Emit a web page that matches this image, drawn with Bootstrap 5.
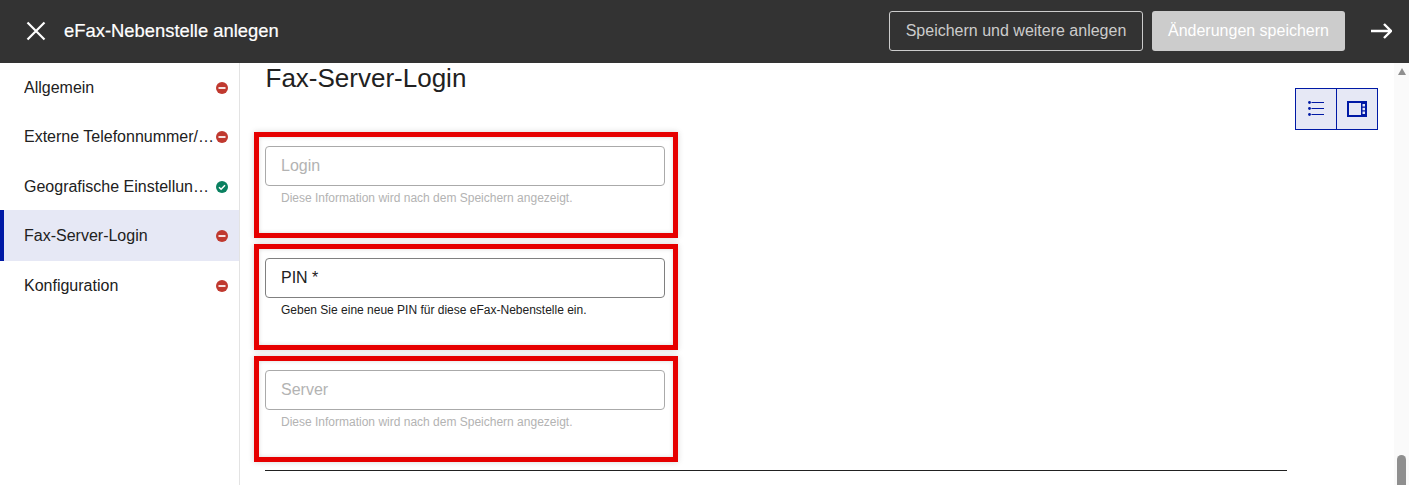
<!doctype html>
<html lang="de">
<head>
<meta charset="utf-8">
<title>eFax-Nebenstelle anlegen</title>
<link href="https://cdn.jsdelivr.net/npm/bootstrap@5.3.0/dist/css/bootstrap.min.css" rel="stylesheet">
<style>
html,body{height:485px;overflow:hidden}
body{font-family:"Liberation Sans",Arial,sans-serif;color:#212121;background:#fff;font-size:16px}
.topbar{height:63px;background:#333;color:#fff;padding:0 17px 1px 26px}
.topbar-title{font-size:18.4px;margin:0 0 0 18px;font-weight:400;-webkit-text-stroke:.2px #fff}
.btn-ghost,.btn-ghost:hover{height:40px;width:254px;border:1px solid #ccc;color:#ccc;background:transparent;border-radius:3px;font-size:16px;padding:0}
.btn-muted,.btn-muted:disabled{height:40px;width:193px;border:0;background:#ccc;color:#fff;opacity:1;border-radius:3px;font-size:16px;padding:0;margin:0 26px 0 9px}
.shell{height:422px}
.sidenav{width:240px;flex:none;border-right:1px solid #e3e3e3}
.sideitem{height:49.5px;padding:1.5px 11px 0 24px;color:#212121;text-decoration:none;font-size:16px}
.sideitem:first-child{height:48.75px}
.sideitem span{white-space:nowrap;overflow:hidden;text-overflow:ellipsis;min-width:0;flex:1}
.sideitem svg{flex:none}
.sideitem.is-current{background:#e6e8f5;box-shadow:inset 4px 0 0 #0019a5;margin-top:-1px;height:51px}
.content{padding:0 16px 0 14px;min-width:0}
.page-head{height:69px}
.page-title{font-size:26px;font-weight:400;line-height:30px;margin:0 0 0 11.500px;color:#212121}
.viewtoggle{margin-top:25px;height:42px;border:1px solid #0019a5;background:#e6e8f5}
.viewtoggle button{width:40px;border:0;background:transparent;padding:0;display:flex;align-items:center;justify-content:center}
.viewtoggle button+button{border-left:1px solid #0019a5;width:41px}
.fieldbox{width:424px;height:106px;border:5px solid #e60000;box-shadow:0 0 4px rgba(0,0,0,.15) inset,0 0 6px rgba(0,0,0,.16);padding:9px 8px 0 6px;margin-bottom:6px}
.fieldbox .form-control{height:40px;border:1px solid #aaa;border-radius:4px;padding:0 15px;font-size:16px;box-shadow:none;background:#fff}
.fieldbox .form-control::placeholder{color:#b3b3b3;opacity:1}
.fieldbox .form-control.is-req{border-color:#808080}
.fieldbox .form-control.is-req::placeholder{color:#212121}
.hint{font-size:12px;line-height:14px;margin:5px 0 0 16px;color:#b3b3b3}
.hint.is-dark{color:#212121}
.rule{margin:8px 0 0 11px;width:1022px;height:1px;background:#212121}
.fakebar{width:15px;flex:none;background:#fafafa}
.fakebar-up{width:0;height:0;border-left:4.500px solid transparent;border-right:4.500px solid transparent;border-bottom:7px solid #8f8f8f;margin-top:5px}
.fakebar-thumb{width:9px;height:30px;background:#8f8f8f;border-radius:5px 5px 0 0}
</style>
</head>
<body>
<header class="topbar d-flex align-items-center">
  <svg width="20" height="20" viewBox="0 0 20 20" fill="none" stroke="#fff" stroke-width="2.2" aria-hidden="true"><path d="M1.500 1.500l17 17M18.500 1.500l-17 17"/></svg>
  <h1 class="topbar-title flex-grow-1">eFax-Nebenstelle anlegen</h1>
  <button class="btn btn-ghost" type="button">Speichern und weitere anlegen</button>
  <button class="btn btn-muted" type="button" disabled>Änderungen speichern</button>
  <svg width="21" height="16" viewBox="0 0 21 16" fill="none" stroke="#fff" stroke-width="2.400" aria-hidden="true"><path d="M0 8h20M13 1l7 7-7 7"/></svg>
</header>
<div class="shell d-flex">
  <nav class="sidenav">
    <a class="sideitem d-flex align-items-center" href="#"><span>Allgemein</span><svg width="12" height="12" viewBox="0 0 12 12"><circle cx="6" cy="6" r="6" fill="#c0392f"/><rect x="2.500" y="5" width="7" height="2" fill="#f6e3e1"/></svg></a>
    <a class="sideitem d-flex align-items-center" href="#"><span>Externe Telefonnummer/Durchwahl</span><svg width="12" height="12" viewBox="0 0 12 12"><circle cx="6" cy="6" r="6" fill="#c0392f"/><rect x="2.500" y="5" width="7" height="2" fill="#f6e3e1"/></svg></a>
    <a class="sideitem d-flex align-items-center" href="#"><span>Geografische Einstellungen</span><svg width="12" height="12" viewBox="0 0 12 12"><circle cx="6" cy="6" r="6" fill="#0a8060"/><path d="M3 6.200l2.100 2L9 4.200" fill="none" stroke="#fff" stroke-width="1.500"/></svg></a>
    <a class="sideitem is-current d-flex align-items-center" href="#"><span>Fax-Server-Login</span><svg width="12" height="12" viewBox="0 0 12 12"><circle cx="6" cy="6" r="6" fill="#c0392f"/><rect x="2.500" y="5" width="7" height="2" fill="#f6e3e1"/></svg></a>
    <a class="sideitem d-flex align-items-center" href="#"><span>Konfiguration</span><svg width="12" height="12" viewBox="0 0 12 12"><circle cx="6" cy="6" r="6" fill="#c0392f"/><rect x="2.500" y="5" width="7" height="2" fill="#f6e3e1"/></svg></a>
  </nav>
  <main class="content flex-grow-1">
    <div class="page-head d-flex justify-content-between align-items-start">
      <h2 class="page-title">Fax-Server-Login</h2>
      <div class="viewtoggle d-flex">
        <button type="button" aria-label="Liste"><svg width="16" height="16" viewBox="0 0 16 16" fill="none" stroke="#0019a5"><path d="M3.500 1.500h12.500M3.500 7.500h12.500M3.500 13.500h12.500"/><circle cx="1.500" cy="1.500" r="1.400" fill="#0019a5" stroke="none"/><circle cx="1.500" cy="7.500" r="1.400" fill="#0019a5" stroke="none"/><circle cx="1.500" cy="13.500" r="1.400" fill="#0019a5" stroke="none"/></svg></button>
        <button type="button" aria-label="Seitenleiste"><svg width="20" height="16" viewBox="0 0 20 16"><rect x="1" y="1" width="18" height="14" fill="#e6e8f5" stroke="#0019a5" stroke-width="2"/><rect x="14" y="1" width="5" height="14" fill="#0019a5"/><rect x="15.500" y="3" width="2.500" height="2.500" fill="#e6e8f5"/><rect x="15.500" y="6.800" width="2.500" height="2.500" fill="#e6e8f5"/><rect x="15.500" y="10.500" width="2.500" height="2.500" fill="#e6e8f5"/></svg></button>
      </div>
    </div>
    <div class="fieldbox">
      <input class="form-control" type="text" placeholder="Login" aria-label="Login">
      <p class="hint">Diese Information wird nach dem Speichern angezeigt.</p>
    </div>
    <div class="fieldbox">
      <input class="form-control is-req" type="text" placeholder="PIN *" aria-label="PIN">
      <p class="hint is-dark">Geben Sie eine neue PIN für diese eFax-Nebenstelle ein.</p>
    </div>
    <div class="fieldbox">
      <input class="form-control" type="text" placeholder="Server" aria-label="Server">
      <p class="hint">Diese Information wird nach dem Speichern angezeigt.</p>
    </div>
    <div class="rule"></div>
  </main>
  <div class="fakebar d-flex flex-column align-items-center justify-content-between">
    <div class="fakebar-up"></div>
    <div class="fakebar-thumb"></div>
  </div>
</div>
<script src="https://cdn.jsdelivr.net/npm/bootstrap@5.3.0/dist/js/bootstrap.bundle.min.js"></script>
</body>
</html>
